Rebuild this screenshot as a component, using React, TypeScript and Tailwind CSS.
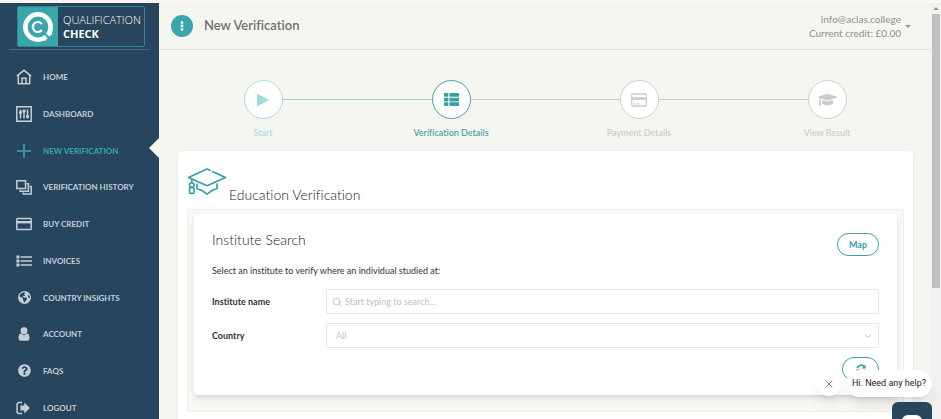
import { useState } from 'react'
import type { ReactNode } from 'react'
import {
  FaEllipsisV,
  FaGraduationCap,
  FaQuestionCircle,
  FaThList,
} from 'react-icons/fa'
import { FaEarthAmericas } from 'react-icons/fa6'
import { Search, X } from 'lucide-react'

const stroke = { fill: 'none', stroke: 'currentColor', strokeWidth: 1.5 }

function HomeIcon() {
  return (
    <svg viewBox="0 0 16 16" className="size-4" {...stroke}>
      <path d="M.8 7.2 8 1.3l7.2 5.9M2.3 6.2v8.6h11.4V6.2M6 14.8V9.3h4v5.5" />
    </svg>
  )
}

function DashboardIcon() {
  return (
    <svg viewBox="0 0 16 16" className="size-4" {...stroke}>
      <path d="M.8.8h14.4v14.4H.8zM4.5 3.5v9M8 3.5v9M11.5 3.5v9" />
      <path d="M3 6.5h3M6.5 5h3M10 10.5h3" strokeWidth="2.4" />
    </svg>
  )
}

function PlusIcon() {
  return (
    <svg viewBox="0 0 16 16" className="size-4" {...stroke}>
      <path d="M8 1v14M1 8h14" />
    </svg>
  )
}

function HistoryIcon() {
  return (
    <svg viewBox="0 0 16 16" className="size-4" {...stroke}>
      <path d="M.8 1.8h8.8v7.6H.8zM10.8 4.8h1.6v7.4H4.2v-1.4M13.6 7.6h1.6V15H7.2v-1.6" />
    </svg>
  )
}

function CreditIcon() {
  return (
    <svg viewBox="0 0 16 16" className="size-4" {...stroke}>
      <rect x=".8" y="2.6" width="14.4" height="11" rx=".8" />
      <path d="M1 6.2h14" strokeWidth="2.4" />
    </svg>
  )
}

function InvoiceIcon() {
  return (
    <svg viewBox="0 0 16 16" className="size-4" {...stroke}>
      <path d="M4.5 4H16M4.5 8H16M4.5 12H16" />
      <path d="M.4 4h3M.4 8h3M.4 12h3" strokeWidth="2.8" />
    </svg>
  )
}

function UserIcon() {
  return (
    <svg viewBox="0 0 16 16" className="size-4" fill="currentColor">
      <circle cx="8" cy="4.8" r="3.5" />
      <path d="M4.8 7.4C3 7.8 2.5 10 2.5 12.3c0 1.5.8 2.4 2 2.4h7c1.2 0 2-.9 2-2.4 0-2.3-.5-4.5-2.3-4.9a4.7 4.7 0 0 1-6.4 0z" />
    </svg>
  )
}

function LogoutIcon() {
  return (
    <svg viewBox="0 0 16 16" className="size-4" fill="currentColor">
      <path d="M6 2.6H3a2 2 0 0 0-2 2v6.8a2 2 0 0 0 2 2h3" fill="none" stroke="currentColor" strokeWidth="1.5" />
      <path d="M8.3 2.4 14 8l-5.7 5.6v-3.2H4.4V5.6h3.9z" />
    </svg>
  )
}

function PlayIcon() {
  return (
    <svg viewBox="0 0 12 14" className="h-3.5 w-3" fill="currentColor">
      <path d="M0 .5v13L12 7z" />
    </svg>
  )
}

function CardIcon() {
  return (
    <svg viewBox="0 0 16 14" className="h-3.5 w-4" fill="none" stroke="currentColor" strokeWidth="1.3">
      <rect x=".7" y="1" width="14.6" height="12" rx="1" />
      <path d="M1 5.5h14" strokeWidth="2.6" />
      <path d="M2.5 10.8H4M5.4 10.8h3" />
    </svg>
  )
}

function ReloadIcon() {
  return (
    <svg viewBox="0 0 10 10" className="size-2.5" fill="none" stroke="currentColor" strokeWidth="1.8">
      <path d="M1.2 4.2A4 4 0 0 1 8.4 3M8.8 5.8A4 4 0 0 1 1.6 7" />
      <path d="M9.6.6v4H5.6zM.4 9.400v-4h4z" fill="currentColor" stroke="none" />
    </svg>
  )
}

function CapOutline() {
  return (
    <svg viewBox="0 0 39 28" className="h-7 w-10" fill="none" stroke="#319fa5" strokeWidth="1.6" strokeLinecap="round" strokeLinejoin="round">
      <path d="M22.5 2.2 19.5 1 1 9.5l18.500 8.200L38 9.500 25.300 3.700" />
      <path d="M9.500 16v4.500c1.200 1.200 3.200.6 5 2l5 3.700 5-3.700c1.800-1.400 3.800-.8 5-2V16" />
      <path d="M4.300 11.400v3" />
      <circle cx="4.300" cy="17" r="2.300" />
      <rect x="2" y="19.600" width="4.600" height="5.800" rx="1.200" />
    </svg>
  )
}

function Logo() {
  return (
    <a href="#home" aria-label="Qualification Check" className="ml-[17px] flex h-[41px] w-32 items-center rounded-xs border border-[#318791] text-white">
      <span className="flex h-full w-10 shrink-0 items-center justify-center bg-[#3aa6ab]">
        <svg viewBox="0 0 34 34" className="size-[34px]" fill="none" stroke="#fff">
          <circle cx="17" cy="17" r="12.7" strokeWidth="4.6" />
          <path d="m27.500 22.500 3.500 1.500M22.500 27.500l2 3" strokeWidth="2" />
          <path d="m22 22 11 11" stroke="#3aa6ab" strokeWidth="2.4" />
          <path d="M20.800 14a5 5 0 1 0 0 6" strokeWidth="2.2" />
        </svg>
      </span>
      <span className="pl-[5px] font-['Open_Sans'] text-[11px] leading-[14px]">
        <span className="block font-light">QUALIFICATION</span>
        <span className="block font-bold">CHECK</span>
      </span>
    </a>
  )
}

const navItems: { label: string; icon: ReactNode; active?: boolean }[] = [
  { label: 'HOME', icon: <HomeIcon /> },
  { label: 'DASHBOARD', icon: <DashboardIcon /> },
  { label: 'NEW VERIFICATION', icon: <PlusIcon />, active: true },
  { label: 'VERIFICATION HISTORY', icon: <HistoryIcon /> },
  { label: 'BUY CREDIT', icon: <CreditIcon /> },
  { label: 'INVOICES', icon: <InvoiceIcon /> },
  { label: 'COUNTRY INSIGHTS', icon: <FaEarthAmericas className="size-[13px]" /> },
  { label: 'ACCOUNT', icon: <UserIcon /> },
  { label: 'FAQS', icon: <FaQuestionCircle className="size-[13px]" /> },
  { label: 'LOGOUT', icon: <LogoutIcon /> },
]

function Sidebar() {
  return (
    <aside className="w-[159px] shrink-0 bg-[#27455c] pt-[3px]">
      <Logo />
      <div className="mx-[9px] mt-0.5 border-b border-[#46677d]" />
      <nav className="mt-[9px]">
        <ul className="flex h-[367px] flex-col">
          {navItems.map((item) => (
            <li key={item.label} className="relative flex flex-1 items-center">
              <a
                href="#"
                className={`flex items-center gap-[11px] pl-4 text-[8px] font-bold ${
                  item.active ? 'text-[#3aa6ab]' : 'text-[#c3ced8]'
                }`}
              >
                <span className="flex w-4 justify-center">{item.icon}</span>
                {item.label}
              </a>
              {item.active && (
                <svg viewBox="0 0 10 20" className="absolute right-0 bottom-[11px] h-5 w-2.5" fill="#f6f6f1">
                  <path d="M10 0v20L0 10z" />
                </svg>
              )}
            </li>
          ))}
        </ul>
      </nav>
    </aside>
  )
}

function Header() {
  return (
    <header className="flex h-[47px] shrink-0 items-center border-b border-[#e2e2de] pr-5 pl-3">
      <button aria-label="Menu" className="flex size-[22px] items-center justify-center rounded-full bg-[#3aa6ab] text-white">
        <FaEllipsisV className="size-2.5" />
      </button>
      <h1 className="ml-[11px] text-[13px] font-semibold text-[#707070]">New Verification</h1>
      <button className="ml-auto flex items-center gap-1 text-right text-[10px] leading-[14px] font-medium text-[#969692]">
        <span>
          info@aclas.college
          <br />
          Current credit: £0.00
        </span>
        <svg viewBox="0 0 6 3" className="h-[3px] w-1.5" fill="currentColor">
          <path d="M0 0h6L3 3z" />
        </svg>
      </button>
    </header>
  )
}

const steps = [
  { label: 'Start', icon: <PlayIcon />, color: 'text-[#9fdadd]', ring: 'border-[#a9d9da]', line: 'bg-[#94d3d5]' },
  { label: 'Verification Details', icon: <FaThList className="size-[15px]" />, color: 'text-[#3a9fa3]', ring: 'border-[#4aa3a6]', line: 'bg-[#c9c9c5]' },
  { label: 'Payment Details', icon: <CardIcon />, color: 'text-[#cbcbc7]', ring: 'border-[#cfcfcb]', line: 'bg-[#c9c9c5]' },
  { label: 'View Result', icon: <FaGraduationCap className="size-[19px]" />, color: 'text-[#cbcbc7]', ring: 'border-[#cfcfcb]', line: '' },
]

function Stepper() {
  return (
    <ol className="grid grid-cols-4 px-2.5 pt-[30px]">
      {steps.map((step, i) => (
        <li key={step.label} className={`flex flex-col items-center ${step.color}`}>
          <div className="flex w-full items-center">
            <span className={`h-px flex-1 ${i > 0 ? steps[i - 1].line : ''}`} />
            <span className={`flex size-[39px] items-center justify-center rounded-full border bg-white ${step.ring}`}>
              {step.icon}
            </span>
            <span className={`h-px flex-1 ${step.line}`} />
          </div>
          <span className="mt-2 text-[9px] leading-3 font-medium">{step.label}</span>
        </li>
      ))}
    </ol>
  )
}

function SearchPanel() {
  const [name, setName] = useState('')

  return (
    <section className="rounded-xs border border-[#efeeea] bg-[#f9f7f3] px-1.5 pt-1 pb-4">
      <div className="rounded bg-white px-[18px] pt-[18px] pb-3.5 shadow-md">
        <div className="flex items-start justify-between">
          <h3 className="text-[14px] leading-4 font-light text-[#222]">Institute Search</h3>
          <button className="mt-px h-[23px] w-[42px] rounded-full border border-[#3a9fa3] text-[9px] font-bold text-[#3a9fa3]">
            Map
          </button>
        </div>
        <p className="mt-[9px] text-[9px] leading-3 text-[#333]">
          Select an institute to verify where an individual studied at:
        </p>
        <div className="mt-3 flex items-center">
          <label htmlFor="institute" className="w-[114px] shrink-0 text-[9px] font-bold text-[#333]">
            Institute name
          </label>
          <div className="flex h-[25px] flex-1 items-center gap-[3px] rounded-xs border border-[#e6e7ea] px-[5px]">
            <Search className="size-2.5 text-[#b5b8be]" strokeWidth={2} />
            <input
              id="institute"
              value={name}
              onChange={(e) => setName(e.target.value)}
              placeholder="Start typing to search..."
              className="flex-1 text-[9px] outline-none placeholder:text-[#bcbfc5]"
            />
          </div>
        </div>
        <div className="mt-[9px] flex items-center">
          <label htmlFor="country" className="w-[114px] shrink-0 text-[9px] font-bold text-[#333]">
            Country
          </label>
          <div className="flex h-[25px] flex-1 items-center rounded-xs border border-[#e6e7ea] pr-1.5 pl-[9px]">
            <select id="country" className="flex-1 appearance-none text-[9px] text-[#c3c5ca] outline-none">
              <option>All</option>
            </select>
            <svg viewBox="0 0 8 8" className="size-2" fill="none" stroke="#b9bcc2">
              <path d="m1 2.500 3 3 3-3" />
            </svg>
          </div>
        </div>
        <div className="mt-[9px] flex justify-end">
          <button aria-label="Reset search" className="flex h-6 w-[37px] items-center justify-center rounded-full border border-[#3a9fa3] text-[#3a9fa3]">
            <ReloadIcon />
          </button>
        </div>
      </div>
    </section>
  )
}

function ChatWidget() {
  return (
    <div className="absolute right-[9px] bottom-0 flex flex-col items-end gap-[5px]">
      <div className="flex items-center gap-[5px]">
        <button aria-label="Close message" className="flex size-6 items-center justify-center rounded-full bg-white text-[#555] shadow-lg">
          <X className="size-3" strokeWidth={1.5} />
        </button>
        <p className="rounded-full bg-white px-1.5 py-[7px] font-['Roboto'] text-[9px] leading-[13px] text-[#222] shadow-lg">
          Hi. Need any help?
        </p>
      </div>
      <button aria-label="Open chat" className="flex h-[17px] w-10 justify-center overflow-hidden rounded-t-md bg-[#27455c] pt-[13px]">
        <span className="h-3 w-5 shrink-0 rounded-md bg-white" />
      </button>
    </div>
  )
}

export default function App() {
  return (
    <div className="relative flex h-screen flex-col overflow-hidden bg-[#f6f6f1] font-['Lato',sans-serif] [font-variant-ligatures:none]">
      <div className="h-[3px] shrink-0 bg-[#fdf5ef]" />
      <div className="flex min-h-0 flex-1">
        <Sidebar />
        <div className="flex min-w-0 flex-1 flex-col">
          <Header />
          <main className="min-h-0 flex-1 overflow-hidden">
            <Stepper />
            <div className="mx-[18px] mt-3 ml-[19px] rounded bg-white px-[9px] pt-[17px] pb-10 shadow-sm">
              <div className="mb-[5px] flex items-start gap-0.5">
                <CapOutline />
                <h2 className="mt-[18px] text-[14px] leading-[18px] font-light text-[#222]">Education Verification</h2>
              </div>
              <SearchPanel />
            </div>
          </main>
        </div>
        <div className="flex w-2.5 shrink-0 flex-col items-center bg-[#f1f1f1]">
          <svg viewBox="0 0 6 11" className="h-[11px] w-1.5" fill="#8b8b8b">
            <path d="M.5 7h5L3 4z" />
          </svg>
          <div className="h-[274px] w-2 bg-[#c1c1c1]" />
        </div>
      </div>
      <ChatWidget />
    </div>
  )
}
